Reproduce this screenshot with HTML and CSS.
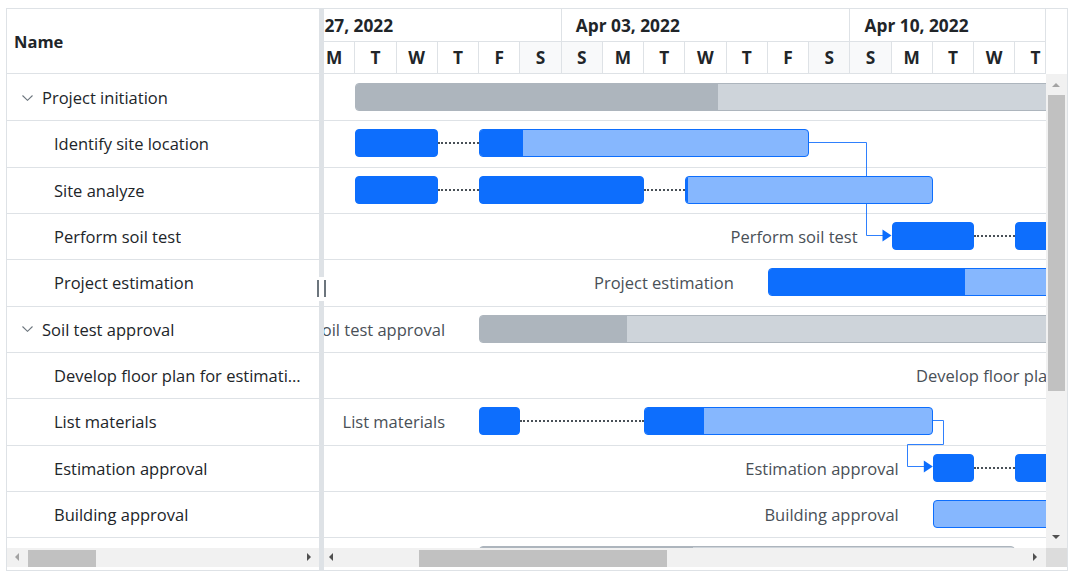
FILE: index.html
```html
<!DOCTYPE html>
<html>
<head>
<meta charset="utf-8">
<link rel="stylesheet" href="styles.css">
</head>
<body>
<div class="gantt">
  <div class="grid-pane">
    <div class="grid-header">Name</div>
    <div class="grid-body">
      <div class="grid-row parent"><svg class="chev" width="11" height="6" viewBox="0 0 11 6"><polyline points="0.5,0.5 5.5,5.3 10.5,0.5" /></svg><span class="cell-text">Project initiation</span></div>
      <div class="grid-row child"><span class="cell-text">Identify site location</span></div>
      <div class="grid-row child"><span class="cell-text">Site analyze</span></div>
      <div class="grid-row child"><span class="cell-text">Perform soil test</span></div>
      <div class="grid-row child"><span class="cell-text">Project estimation</span></div>
      <div class="grid-row parent"><svg class="chev" width="11" height="6" viewBox="0 0 11 6"><polyline points="0.5,0.5 5.5,5.3 10.5,0.5" /></svg><span class="cell-text">Soil test approval</span></div>
      <div class="grid-row child"><span class="cell-text">Develop floor plan for estimation</span></div>
      <div class="grid-row child"><span class="cell-text">List materials</span></div>
      <div class="grid-row child"><span class="cell-text">Estimation approval</span></div>
      <div class="grid-row child"><span class="cell-text">Building approval</span></div>
    </div>
    <div class="hscroll hs-left">
      <span class="arr arr-left dim"></span>
      <span class="thumb"></span>
      <span class="arr arr-right"></span>
    </div>
  </div>
  <div class="splitter"><span class="handle"></span></div>
  <div class="chart-pane">
    <div class="chart-top">
      <div class="timeline">
        <div class="tl-inner">
          <div class="weeks">
            <div class="week">Mar 27, 2022</div>
            <div class="week">Apr 03, 2022</div>
            <div class="week">Apr 10, 2022</div>
          </div>
          <div class="days">
            <div class="day we">S</div><div class="day">M</div><div class="day">T</div><div class="day">W</div><div class="day">T</div><div class="day">F</div><div class="day we">S</div>
            <div class="day we">S</div><div class="day">M</div><div class="day">T</div><div class="day">W</div><div class="day">T</div><div class="day">F</div><div class="day we">S</div>
            <div class="day we">S</div><div class="day">M</div><div class="day">T</div><div class="day">W</div><div class="day">T</div><div class="day">F</div><div class="day we">S</div>
          </div>
        </div>
      </div>
      <div class="vs-head"></div>
    </div>
    <div class="chart-mid">
      <div class="chart-body">
        <div class="crow">
          <div class="bar parent" style="left:31.3px;width:800px"><div class="prog" style="width:362px"></div></div>
        </div>
        <div class="crow">
          <div class="bar full" style="left:31.3px;width:82.5px"></div>
          <div class="gap" style="left:113.8px;width:41.25px"></div>
          <div class="bar task" style="left:155.05px;width:330px"><div class="prog" style="width:43px"></div></div>
        </div>
        <div class="crow">
          <div class="bar full" style="left:31.3px;width:82.5px"></div>
          <div class="gap" style="left:113.8px;width:41.25px"></div>
          <div class="bar full" style="left:155.05px;width:165px"></div>
          <div class="gap" style="left:320.05px;width:41.25px"></div>
          <div class="bar task" style="left:361.3px;width:247.5px"><div class="prog" style="width:2px"></div></div>
        </div>
        <div class="crow">
          <div class="label" style="left:567.55px">Perform soil test</div>
          <div class="bar full" style="left:567.55px;width:82.5px"></div>
          <div class="gap" style="left:650.05px;width:41.25px"></div>
          <div class="bar full" style="left:691.3px;width:200px"></div>
        </div>
        <div class="crow">
          <div class="label" style="left:443.8px">Project estimation</div>
          <div class="bar task" style="left:443.8px;width:400px"><div class="prog" style="width:196px"></div></div>
        </div>
        <div class="crow">
          <div class="label" style="left:155.05px">Soil test approval</div>
          <div class="bar parent" style="left:155.05px;width:700px"><div class="prog" style="width:147px"></div></div>
        </div>
        <div class="crow">
          <div class="label label-start" style="left:592px">Develop floor plan for estimation</div>
        </div>
        <div class="crow">
          <div class="label" style="left:155.05px">List materials</div>
          <div class="bar full" style="left:155.05px;width:41.25px"></div>
          <div class="gap" style="left:196.3px;width:123.75px"></div>
          <div class="bar task" style="left:320.05px;width:288.75px"><div class="prog" style="width:59px"></div></div>
        </div>
        <div class="crow">
          <div class="label" style="left:608.8px">Estimation approval</div>
          <div class="bar full" style="left:608.8px;width:41.25px"></div>
          <div class="gap" style="left:650.05px;width:41.25px"></div>
          <div class="bar full" style="left:691.3px;width:200px"></div>
        </div>
        <div class="crow">
          <div class="label" style="left:608.8px">Building approval</div>
          <div class="bar task" style="left:608.8px;width:300px"></div>
        </div>
        <div class="crow">
          <div class="bar parent" style="left:155.05px;width:536.25px"><div class="prog" style="width:213px"></div></div>
        </div>
        <svg class="connectors" width="722" height="474" viewBox="0 0 722 474">
          <path d="M485 68.5 H542.5 V161.5 H559" />
          <polygon points="558.5,155.5 567.5,161.5 558.5,167.5" />
          <path d="M608.8 346.5 H619.5 V370.5 H583.5 V392.5 H600" />
          <polygon points="599.8,386.5 608.8,392.5 599.8,398.5" />
        </svg>
      </div>
      <div class="vscroll">
        <span class="arr arr-up dim"></span>
        <span class="vthumb"></span>
        <span class="arr arr-down"></span>
      </div>
    </div>
    <div class="chart-bottom">
      <div class="hscroll hs-right">
        <span class="arr arr-left"></span>
        <span class="thumb"></span>
        <span class="arr arr-right"></span>
      </div>
      <div class="corner"></div>
    </div>
  </div>
</div>
</body>
</html>
```
FILE: styles.css
```css
* { box-sizing: border-box; }
body {
  margin: 0;
  background: #fff;
  font-family: "Open Sans", "Noto Sans", sans-serif;
  color: #212529;
}
.gantt {
  margin: 8px 0 0 6px;
  width: 1062px;
  height: 563px;
  border: 1px solid #dee2e6;
  display: flex;
}
/* ---------- grid ---------- */
.grid-pane {
  width: 312px;
  display: flex;
  flex-direction: column;
  padding-bottom: 3px;
}
.grid-header {
  height: 65px;
  flex: none;
  border-bottom: 1px solid #dee2e6;
  display: flex;
  align-items: center;
  padding-left: 7px;
  font-weight: 700;
  font-size: 16.5px;
}
.grid-body { flex: 1; overflow: hidden; padding-top: 1px; }
.grid-row {
  height: 46.33px;
  border-bottom: 1px solid #dee2e6;
  display: flex;
  align-items: center;
  font-size: 16.5px;
  white-space: nowrap;
  padding-right: 16px;
}
.grid-row.parent { padding-left: 15px; gap: 9px; }
.grid-row.child { padding-left: 47px; }
.cell-text { overflow: hidden; text-overflow: ellipsis; }
.chev { flex: none; }
.chev polyline { fill: none; stroke: #6c757d; stroke-width: 1.1; }

/* ---------- splitter ---------- */
.splitter {
  width: 5px;
  background: #dee2e6;
  position: relative;
}
.handle {
  position: absolute;
  left: -3px;
  top: 268px;
  width: 11px;
  height: 24px;
  background: #fff;
}
.handle::before, .handle::after {
  content: "";
  position: absolute;
  top: 3px;
  width: 2.5px;
  height: 17px;
  background: #6c757d;
}
.handle::before { left: 0.5px; }
.handle::after { left: 7.5px; }

/* ---------- chart ---------- */
.chart-pane {
  width: 743px;
  display: flex;
  flex-direction: column;
  padding-bottom: 3px;
}
.chart-top { height: 65px; display: flex; flex: none; }
.timeline {
  width: 722px;
  border-right: 1px solid #dee2e6;
  border-bottom: 1px solid #dee2e6;
  overflow: hidden;
}
.tl-inner { margin-left: -51.2px; width: 900px; }
.weeks {
  display: flex;
  height: 33px;
  border-bottom: 1px solid #dee2e6;
}
.week {
  flex: 0 0 288.75px;
  border-right: 1px solid #dee2e6;
  padding-left: 12.5px;
  display: flex;
  align-items: center;
  font-weight: 700;
  font-size: 17.3px;
  white-space: nowrap;
}
.week + .week { padding-left: 14.3px; }
.days { display: flex; height: 31px; }
.day {
  flex: 0 0 41.25px;
  border-right: 1px solid #dee2e6;
  display: flex;
  align-items: center;
  justify-content: center;
  font-weight: 700;
  font-size: 17.3px;
}
.day.we { background: #f8f9fa; }
.vs-head { width: 21px; }

.chart-mid { height: 474px; display: flex; flex: none; }
.chart-body {
  width: 722px;
  position: relative;
  overflow: hidden;
  padding-top: 1px;
}
.crow {
  height: 46.33px;
  border-bottom: 1px solid #dee2e6;
  position: relative;
}
.bar {
  position: absolute;
  top: 8px;
  height: 28px;
  border-radius: 4px;
  overflow: hidden;
  z-index: 2;
}
.bar .prog { height: 100%; }
.bar.task { background: #86b7fe; border: 1px solid #0d6efd; }
.bar.task .prog { background: #0d6efd; }
.bar.full { background: #0d6efd; border: 1px solid #0d6efd; }
.bar.parent { background: #ced4da; border: 1px solid #adb5bd; }
.bar.parent .prog { background: #adb5bd; }
.gap {
  position: absolute;
  top: 21px;
  height: 0;
  border-top: 2px dotted #495057;
}
.label {
  position: absolute;
  top: 0;
  bottom: 0;
  display: flex;
  align-items: center;
  white-space: nowrap;
  font-size: 16.5px;
  color: #495057;
  transform: translateX(-100%);
  margin-left: -34px;
}
.label.label-start { transform: none; margin-left: 0; }
.connectors {
  position: absolute;
  left: 0;
  top: 0;
  z-index: 1;
}
.connectors path { fill: none; stroke: #2f80fd; stroke-width: 1; }
.connectors polygon { fill: #0d6efd; }

/* ---------- scrollbars ---------- */
.vscroll {
  width: 21px;
  background: #f1f1f1;
  position: relative;
}
.vthumb {
  position: absolute;
  left: 2px;
  top: 21px;
  width: 17px;
  height: 296px;
  background: #c1c1c1;
}
.chart-bottom { height: 19px; display: flex; flex: none; }
.hscroll {
  height: 19px;
  background: #f1f1f1;
  position: relative;
}
.hs-left { width: 312px; flex: none; }
.hs-right { width: 722px; }
.hscroll .thumb {
  position: absolute;
  top: 2px;
  height: 17px;
  background: #c1c1c1;
}
.hs-left .thumb { left: 21px; width: 68px; }
.hs-right .thumb { left: 95px; width: 248px; }
.corner { width: 21px; background: #dcdcdc; }

.arr {
  position: absolute;
  width: 0;
  height: 0;
  border: 0 solid transparent;
}
.arr-left {
  top: 5px;
  border-top-width: 4.5px;
  border-bottom-width: 4.5px;
  border-right: 4.5px solid #505050;
}
.arr-right {
  top: 5px;
  border-top-width: 4.5px;
  border-bottom-width: 4.5px;
  border-left: 4.5px solid #505050;
}
.hs-left .arr-left { left: 8px; }
.hs-left .arr-right { left: 300px; }
.hs-right .arr-left { left: 5px; }
.hs-right .arr-right { left: 709px; }
.arr-up {
  left: 6px;
  top: 9px;
  border-left-width: 4.5px;
  border-right-width: 4.5px;
  border-bottom: 4.5px solid #505050;
}
.arr-down {
  left: 6px;
  top: 461px;
  border-left-width: 4.5px;
  border-right-width: 4.5px;
  border-top: 4.5px solid #505050;
}
.arr.dim.arr-left { border-right-color: #a3a3a3; }
.arr.dim.arr-up { border-bottom-color: #a3a3a3; }
```
